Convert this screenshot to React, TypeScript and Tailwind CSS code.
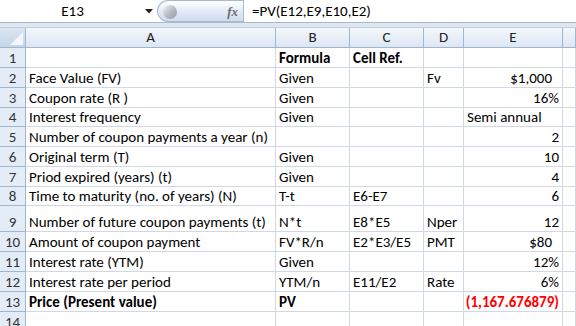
const FONT = { fontFamily: '"Carlito", "Lato", "Liberation Sans", sans-serif' };

type Row = {
  n: number;
  h: string;
  a?: string;
  b?: string;
  c?: string;
  d?: string;
  e?: string;
  eLeft?: boolean;
  bold?: boolean;
  red?: boolean;
  pad?: string;
};

const rows: Row[] = [
  { n: 1, h: "h-[20px]", b: "Formula", c: "Cell Ref.", bold: true, a: "" },
  { n: 2, h: "h-[20px]", a: "Face Value (FV)", b: "Given", d: "Fv", e: "$1,000", pad: "pr-[10px]" },
  { n: 3, h: "h-[20px]", a: "Coupon rate (R )", b: "Given", e: "16%" },
  { n: 4, h: "h-[19px]", a: "Interest frequency", b: "Given", e: "Semi annual", eLeft: true },
  { n: 5, h: "h-[20px]", a: "Number of coupon payments a year (n)", e: "2" },
  { n: 6, h: "h-[20px]", a: "Original term (T)", b: "Given", e: "10" },
  { n: 7, h: "h-[20px]", a: "Priod expired (years) (t)", b: "Given", e: "4" },
  { n: 8, h: "h-[19px]", a: "Time to maturity (no. of years) (N)", b: "T-t", c: "E6-E7", e: "6" },
  { n: 9, h: "h-[26px]", a: "Number of future coupon payments (t)", b: "N*t", c: "E8*E5", d: "Nper", e: "12" },
  { n: 10, h: "h-[20px]", a: "Amount of coupon payment", b: "FV*R/n", c: "E2*E3/E5", d: "PMT", e: "$80", pad: "pr-[10px]" },
  { n: 11, h: "h-[20px]", a: "Interest rate (YTM)", b: "Given", e: "12%" },
  { n: 12, h: "h-[20px]", a: "Interest rate per period", b: "YTM/n", c: "E11/E2", d: "Rate", e: "6%" },
  { n: 13, h: "h-[20px]", a: "Price (Present value)", b: "PV", e: "(1,167.676879)", bold: true, red: true },
  { n: 14, h: "h-[20px]" },
];

const grid = "grid grid-cols-[26px_250px_74px_74px_40px_99px_1fr]";
const cell = "flex items-end pb-[1px] pl-[3px] border-r border-b border-[#d0d7e5] whitespace-nowrap overflow-hidden";

function FormulaBar() {
  return (
    <div className="h-[28px] bg-[#dfe7f1] border-b border-[#c1cddc]">
      <div className="flex h-[23px] bg-white border-b border-[#a7b8cf]">
        <div className="relative w-[157px] flex items-center justify-center text-[15px] text-black">
          <span className="pr-[12px]">E13</span>
          <svg className="absolute left-[145px] top-[9px]" width="8" height="5" viewBox="0 0 8 5">
            <path d="M0 0 H8 L4 4.5 Z" fill="#222" />
          </svg>
        </div>
        <div className="relative w-[86px] h-full flex items-center justify-end pr-[5px] rounded-l-full border-l border-t border-b border-[#a7b8cf] bg-gradient-to-b from-[#ffffff] via-[#e4ecf7] to-[#cfdcec]">
          <div className="absolute left-[5px] top-[4px] w-[14px] h-[14px] rounded-full bg-gradient-to-br from-[#f4f4f4] via-[#b9bfc6] to-[#8e959d]" />
          <span className="italic font-bold text-[13px] text-[#6d6d6d]" style={{ fontFamily: '"Liberation Serif", serif' }}>
            fx
          </span>
        </div>
        <div className="flex-1 flex items-center pl-[8px] border-l border-[#a7b8cf] text-[15px] text-black">
          =PV(E12,E9,E10,E2)
        </div>
      </div>
    </div>
  );
}

function Header() {
  const cols = ["A", "B", "C", "D", "E", ""];
  return (
    <div className={`${grid} h-[20px]`}>
      <div className="relative border-r border-b border-[#9eb6ce] bg-gradient-to-b from-[#dbe5f2] to-[#c6d5e8]">
        <svg className="absolute right-[2px] bottom-[2px]" width="13" height="13" viewBox="0 0 13 13">
          <path d="M13 0 V13 H0 Z" fill="#f3f6fa" />
        </svg>
      </div>
      {cols.map((c, i) => (
        <div
          key={i}
          className="flex items-center justify-center border-r border-b border-[#9eb6ce] bg-gradient-to-b from-[#f3f7fc] to-[#dde6f2] text-[15px] text-[#222]"
        >
          {c}
        </div>
      ))}
    </div>
  );
}

function SheetRow({ r }: { r: Row }) {
  const w = r.bold ? "font-bold" : "";
  return (
    <div className={`${grid} ${r.h}`}>
      <div className="flex items-end justify-center pb-[1px] border-r border-b border-[#9eb6ce] bg-[#e4ecf7] text-[15px] text-[#333]">
        {r.n}
      </div>
      <div className={`${cell} ${w}`}>{r.a}</div>
      <div className={`${cell} ${w}`}>{r.b}</div>
      <div className={`${cell} ${w}`}>{r.c}</div>
      <div className={`${cell}`}>{r.d}</div>
      <div
        className={`${cell} ${r.eLeft ? "" : "justify-end"} ${r.pad ?? "pr-[3px]"} ${w} ${r.red ? "text-[#ff0000]" : ""}`}
      >
        {r.e}
      </div>
      <div className={cell} />
    </div>
  );
}

export default function App() {
  return (
    <div className="w-[576px] h-[326px] overflow-hidden bg-white text-black text-[15px] leading-none" style={FONT}>
      <FormulaBar />
      <Header />
      {rows.map((r) => (
        <SheetRow key={r.n} r={r} />
      ))}
    </div>
  );
}
